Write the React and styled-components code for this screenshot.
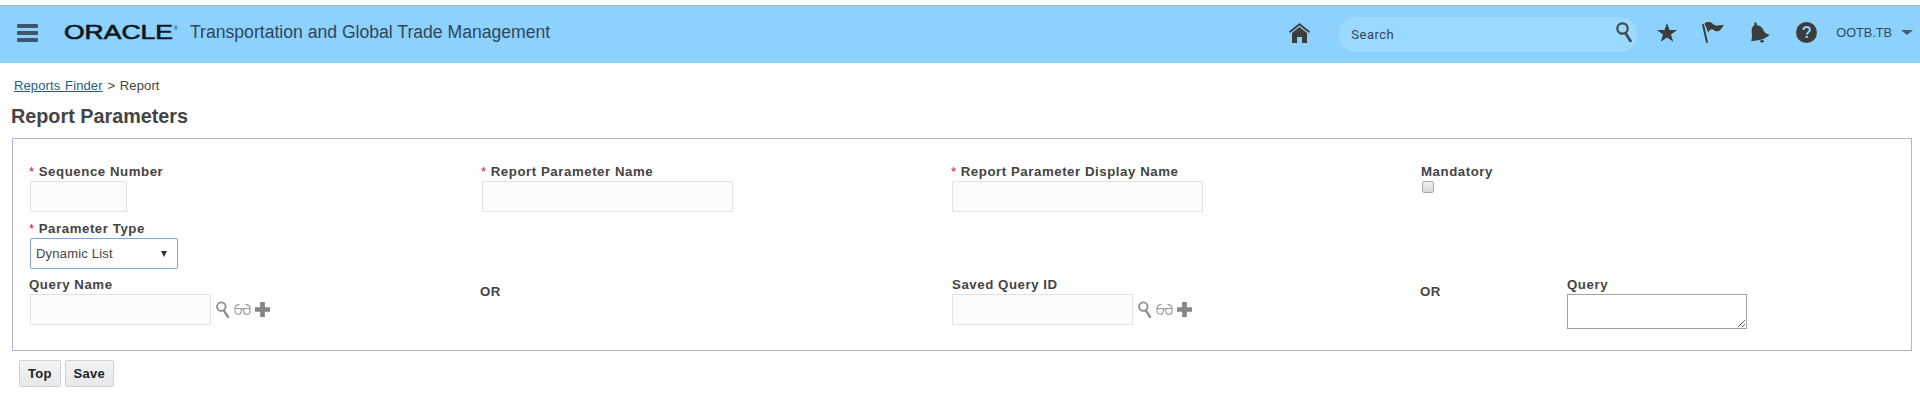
import React from 'react'
import styled, { createGlobalStyle } from 'styled-components'

const GlobalStyle = createGlobalStyle`
  html, body {
    margin: 0;
    padding: 0;
    background: #fff;
    font-family: "Liberation Sans", Arial, sans-serif;
    color: #444;
  }
`

const TopBar = styled.header`
  display: flex;
  align-items: center;
  box-sizing: border-box;
  height: 58px;
  margin-top: 5px;
  padding: 0 7px 0 17px;
  background: #8dd1ff;
  border-top: 1px solid #a9b6bf;
`

const MenuButton = styled.div`
  display: flex;
  flex-direction: column;
  gap: 3px;
  width: 21px;
  margin: 0 26px 4px 0;
  span {
    height: 4px;
    border-radius: 1px;
    background: #3b566d;
  }
`

const LogoSvg = styled.svg`
  display: block;
  width: 114px;
  height: 20px;
  margin: 0 12px 6px 0;
`

const AppTitle = styled.div`
  flex: 1;
  margin-bottom: 4px;
  font-size: 17.6px;
  color: #2f4659;
`

const IconSlot = styled.div`
  display: flex;
  width: ${({ $w }) => $w}px;
  margin: 0 0 4px ${({ $ml }) => $ml || 0}px;
  color: #3c3c3c;
  svg {
    display: block;
    width: 100%;
  }
`

const SearchBox = styled.div`
  display: flex;
  align-items: center;
  justify-content: space-between;
  box-sizing: border-box;
  width: 298px;
  height: 35px;
  margin: 0 0 1px 29px;
  padding: 0 4px 0 12px;
  border-radius: 16px;
  background: #9cd9ff;
  font-family: Roboto, sans-serif;
  font-size: 13px;
  letter-spacing: 0.5px;
  color: #2f4659;
`

const UserMenu = styled.div`
  display: flex;
  align-items: center;
  gap: 9px;
  margin: 0 0 4px 19px;
  font-size: 12.7px;
  color: #2c4a63;
  &::after {
    content: '';
    border-left: 6px solid transparent;
    border-right: 6px solid transparent;
    border-top: 5px solid #4a5c6b;
  }
`

const Content = styled.main`
  padding: 0 8px 0 12px;
`

const Breadcrumb = styled.div`
  margin: 15px 0 0 2px;
  font-size: 13px;
  line-height: 16px;
  letter-spacing: 0.12px;
  word-spacing: 1px;
  color: #444;
  a {
    color: #2a5a8a;
    text-decoration: underline;
  }
`

const Heading = styled.h1`
  margin: 10px 0 0 -1px;
  font-size: 19.8px;
  line-height: 24px;
  font-weight: bold;
  color: #444;
`

const Panel = styled.section`
  display: grid;
  grid-template-columns: 451px repeat(3, 470px);
  grid-template-rows: 49px 48px auto;
  row-gap: 8px;
  box-sizing: border-box;
  height: 213px;
  margin-top: 10px;
  padding: 24px 0 0 17px;
  border: 1px solid #a9b8cc;
`

const Field = styled.div`
  min-width: 0;
  grid-column: ${({ $span }) => $span || 'auto'};
`

const QueryCell = styled.div`
  display: flex;
`

const OrLabel = styled.div`
  margin: 7px 0 0 -1px;
  width: ${({ $w }) => $w || 'auto'};
  font-size: 13.25px;
  line-height: 18px;
  font-weight: bold;
  letter-spacing: 0.5px;
  color: #444;
`

const Label = styled.label`
  display: block;
  margin-left: ${({ $ml }) => $ml || 0}px;
  font-size: 13.25px;
  line-height: 18px;
  font-weight: bold;
  letter-spacing: 0.55px;
  white-space: nowrap;
  color: #444;
`

const Star = styled.span`
  margin-right: 4px;
  font-weight: normal;
  color: #d0142c;
`

const TextInput = styled.input`
  display: block;
  box-sizing: border-box;
  width: ${({ $w }) => $w}px;
  height: 31px;
  margin: 0 0 0 ${({ $ml }) => $ml || 0}px;
  padding: 0 6px;
  background: #fbfcfe;
  border: 1px solid #e0e2e4;
  border-radius: 1px;
  outline: none;
`

const CheckBox = styled.input`
  display: block;
  width: 12px;
  height: 12px;
  margin: 0 0 0 1px;
  appearance: none;
  background: linear-gradient(#f2f2f2, #d8d8d8);
  border: 1px solid #a9a9a9;
  border-radius: 2px;
`

const SelectBox = styled.div`
  display: flex;
  align-items: center;
  justify-content: space-between;
  box-sizing: border-box;
  width: 148px;
  height: 31px;
  padding: 0 10px 0 5px;
  background: #fff;
  border: 1px solid #7da7dc;
  border-radius: 2px;
  font-size: 13px;
  letter-spacing: 0.2px;
  color: #444;
  &::after {
    content: '';
    border-left: 3px solid transparent;
    border-right: 3px solid transparent;
    border-top: 6px solid #333;
  }
`

const LookupRow = styled.div`
  display: flex;
  align-items: center;
  gap: 5px;
`

const LookupIcons = styled.div`
  display: flex;
  align-items: center;
  gap: 4px;
`

const Glyph = styled.svg`
  display: block;
  flex: none;
`

const QueryArea = styled.textarea`
  display: block;
  box-sizing: border-box;
  width: 180px;
  height: 35px;
  margin: 0;
  background: #fff;
  border: 1px solid #a3a3a3;
  outline: none;
`

const ButtonRow = styled.div`
  display: flex;
  gap: 4px;
  margin: 9px 0 0 7px;
`

const Button = styled.button`
  box-sizing: border-box;
  height: 27px;
  padding: 0 8px;
  background: linear-gradient(#f3f4f5, #e6e8ea);
  border: 1px solid #cfd2d5;
  border-radius: 2px;
  font-family: "Liberation Sans", Arial, sans-serif;
  font-size: 13px;
  font-weight: bold;
  letter-spacing: 0.25px;
  color: #222;
`

const HomeIcon = () => (
  <svg viewBox="0 0 21 20" fill="currentColor">
    <path d="M10.5 0 21 8.6l-1.1 1.4L10.5 2.4 1.1 10 0 8.6z" />
    <path d="M10.5 4 18 10v10h-5v-6H8v6H3V10z" />
  </svg>
)

const SearchIcon = ({ width = 17, height = 20, color = '#3f4a52' }) => (
  <Glyph width={width} height={height} viewBox="0 0 17 20" fill="none" stroke={color}>
    <circle cx="6.5" cy="6.5" r="5.2" strokeWidth="2.2" />
    <path d="M10 12l4.5 7" strokeWidth="2.8" strokeLinecap="round" />
  </Glyph>
)

const StarIcon = () => (
  <svg viewBox="0 0 20 19" fill="currentColor">
    <path d="M10 0l2.5 6.9H20l-6 4.5 2.2 7.4L10 14.4l-6.2 4.4L6 11.4 0 6.9h7.5z" />
  </svg>
)

const FlagIcon = () => (
  <svg viewBox="0 0 22 21" fill="currentColor">
    <path d="M0 2.5 1.9 2 6 20.400 4.100 21z" />
    <path d="M2.500 1.500C5 -.5 8.500 -.2 10.500 1.500c1.500 1.300 3 2.300 5 2 2-.3 4-.8 6.500-.3-1.500 1.300-2.500 3.500-4 5-2 1.800-4.500 1.300-6.500-.2-1.800-1.300-3.500-1-5.300 2.500z" />
  </svg>
)

const BellIcon = () => (
  <svg viewBox="0 0 20 22" fill="currentColor">
    <path d="M3.500.5h2l.8 3c4.200.5 6.200 3 7.200 6 .8 2 3 3.200 6 3.800-2.500 2.800-7 5-12 6-2.500.5-5.500.8-7.500.8 1.300-3 1.200-6 .8-9C.4 7.500 1 5 3.500 3.500z" />
    <path d="M9 20c1 1.800 3 2 4.800.8l-1-2.500z" />
  </svg>
)

const HelpIcon = () => (
  <svg viewBox="0 0 21 21">
    <circle cx="10.500" cy="10.500" r="10.500" fill="currentColor" />
    <path d="M7.300 8c.2-2 1.500-3 3.300-3 2 0 3.300 1.200 3.300 2.800 0 2.500-3 2.500-3 4.700" fill="none" stroke="#8dd1ff" strokeWidth="2" />
    <rect x="9.600" y="13.800" width="2.200" height="2.200" fill="#8dd1ff" />
  </svg>
)

const GlassesIcon = () => (
  <Glyph width="17" height="11" viewBox="0 0 17 11" fill="none" stroke="#9a9a9a" strokeWidth="1.100">
    <path d="M1 4.500h6.200v3c0 1.500-1 2.800-3 2.800S1 9 1 7.500zM9.800 4.500H16v3c0 1.500-1 2.800-3.100 2.800s-3.100-1.300-3.100-2.800z" />
    <path d="M7.200 5.500c.8-.5 1.800-.5 2.600 0M1 4.500C1 2 2.800.6 5.500.6M16 4.500C16 2 14.200.6 11.500.6" />
  </Glyph>
)

const PlusIcon = () => (
  <Glyph width="15" height="15" viewBox="0 0 16 16" fill="#858585">
    <path d="M5.500 0h5v5.500H16v5h-5.500V16h-5v-5.500H0v-5h5.500z" />
  </Glyph>
)

const Lookup = () => (
  <LookupIcons>
    <SearchIcon width={14} height={17} color="#8b8b8b" />
    <GlassesIcon />
    <PlusIcon />
  </LookupIcons>
)

const Required = ({ children, ml }) => (
  <Label $ml={ml}>
    <Star>*</Star>
    {children}
  </Label>
)

export default function App() {
  return (
    <>
      <GlobalStyle />
      <TopBar>
        <MenuButton>
          <span />
          <span />
          <span />
        </MenuButton>
        <LogoSvg viewBox="0 0 114 20">
          <text x="0" y="17" fontFamily="Liberation Sans" fontSize="19.500" stroke="#10171f" strokeWidth="0.600" fill="#10171f" textLength="109" lengthAdjust="spacingAndGlyphs">
            ORACLE
          </text>
          <text x="110" y="8" fontFamily="Liberation Sans" fontSize="5" fill="#10171f">®</text>
        </LogoSvg>
        <AppTitle>Transportation and Global Trade Management</AppTitle>
        <IconSlot $w={21}><HomeIcon /></IconSlot>
        <SearchBox>
          Search
          <IconSlot $w={17}><SearchIcon /></IconSlot>
        </SearchBox>
        <IconSlot $w={20} $ml={20}><StarIcon /></IconSlot>
        <IconSlot $w={22} $ml={25}><FlagIcon /></IconSlot>
        <IconSlot $w={19} $ml={27}><BellIcon /></IconSlot>
        <IconSlot $w={21} $ml={26}><HelpIcon /></IconSlot>
        <UserMenu>OOTB.TB</UserMenu>
      </TopBar>
      <Content>
        <Breadcrumb>
          <a href="#finder">Reports Finder</a> &gt; Report
        </Breadcrumb>
        <Heading>Report Parameters</Heading>
        <Panel>
          <Field>
            <Required ml={-1}>Sequence Number</Required>
            <TextInput $w={97} />
          </Field>
          <Field>
            <Required>Report Parameter Name</Required>
            <TextInput $w={251} $ml={1} />
          </Field>
          <Field>
            <Required>Report Parameter Display Name</Required>
            <TextInput $w={251} $ml={1} />
          </Field>
          <Field>
            <Label>Mandatory</Label>
            <CheckBox type="checkbox" />
          </Field>
          <Field $span="1 / 5">
            <Required ml={-1}>Parameter Type</Required>
            <SelectBox>Dynamic List</SelectBox>
          </Field>
          <Field>
            <Label $ml={-1}>Query Name</Label>
            <LookupRow>
              <TextInput $w={181} />
              <Lookup />
            </LookupRow>
          </Field>
          <OrLabel>OR</OrLabel>
          <Field>
            <Label $ml={1}>Saved Query ID</Label>
            <LookupRow>
              <TextInput $w={181} $ml={1} />
              <Lookup />
            </LookupRow>
          </Field>
          <QueryCell>
            <OrLabel $w="147px">OR</OrLabel>
            <Field>
              <Label>Query</Label>
              <QueryArea />
            </Field>
          </QueryCell>
        </Panel>
        <ButtonRow>
          <Button>Top</Button>
          <Button>Save</Button>
        </ButtonRow>
      </Content>
    </>
  )
}
